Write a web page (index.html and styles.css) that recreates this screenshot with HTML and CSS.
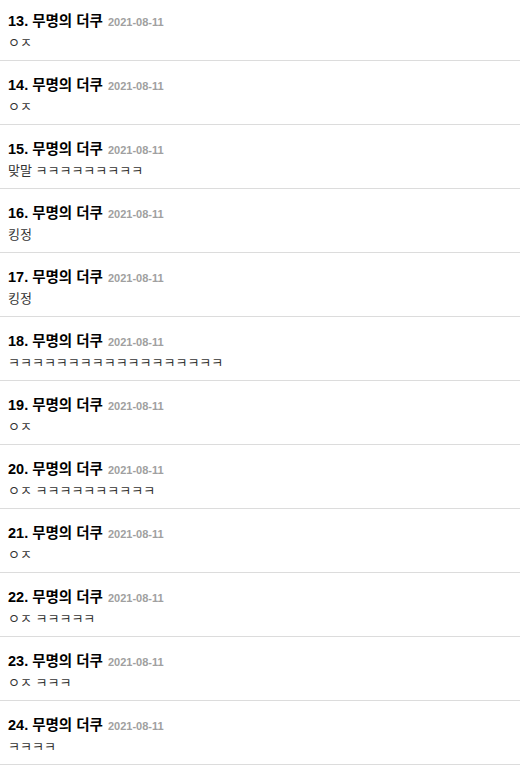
FILE: index.html
```html
<!DOCTYPE html>
<html lang="ko">
<head>
  <meta charset="UTF-8">
  <meta name="viewport" content="width=device-width, initial-scale=1.0">
  <title>댓글</title>
  <link rel="stylesheet" href="styles.css">
</head>
<body>
  <ul class="comments">
    <li class="comment">
      <div class="comment-head"><span class="comment-name">13. 무명의 더쿠</span><span class="comment-date">2021-08-11</span></div>
      <div class="comment-body">ㅇㅈ</div>
    </li>
    <li class="comment">
      <div class="comment-head"><span class="comment-name">14. 무명의 더쿠</span><span class="comment-date">2021-08-11</span></div>
      <div class="comment-body">ㅇㅈ</div>
    </li>
    <li class="comment">
      <div class="comment-head"><span class="comment-name">15. 무명의 더쿠</span><span class="comment-date">2021-08-11</span></div>
      <div class="comment-body">맞말 ㅋㅋㅋㅋㅋㅋㅋㅋㅋ</div>
    </li>
    <li class="comment">
      <div class="comment-head"><span class="comment-name">16. 무명의 더쿠</span><span class="comment-date">2021-08-11</span></div>
      <div class="comment-body">킹정</div>
    </li>
    <li class="comment">
      <div class="comment-head"><span class="comment-name">17. 무명의 더쿠</span><span class="comment-date">2021-08-11</span></div>
      <div class="comment-body">킹정</div>
    </li>
    <li class="comment">
      <div class="comment-head"><span class="comment-name">18. 무명의 더쿠</span><span class="comment-date">2021-08-11</span></div>
      <div class="comment-body">ㅋㅋㅋㅋㅋㅋㅋㅋㅋㅋㅋㅋㅋㅋㅋㅋㅋㅋ</div>
    </li>
    <li class="comment">
      <div class="comment-head"><span class="comment-name">19. 무명의 더쿠</span><span class="comment-date">2021-08-11</span></div>
      <div class="comment-body">ㅇㅈ</div>
    </li>
    <li class="comment">
      <div class="comment-head"><span class="comment-name">20. 무명의 더쿠</span><span class="comment-date">2021-08-11</span></div>
      <div class="comment-body">ㅇㅈ ㅋㅋㅋㅋㅋㅋㅋㅋㅋㅋ</div>
    </li>
    <li class="comment">
      <div class="comment-head"><span class="comment-name">21. 무명의 더쿠</span><span class="comment-date">2021-08-11</span></div>
      <div class="comment-body">ㅇㅈ</div>
    </li>
    <li class="comment">
      <div class="comment-head"><span class="comment-name">22. 무명의 더쿠</span><span class="comment-date">2021-08-11</span></div>
      <div class="comment-body">ㅇㅈ ㅋㅋㅋㅋㅋ</div>
    </li>
    <li class="comment">
      <div class="comment-head"><span class="comment-name">23. 무명의 더쿠</span><span class="comment-date">2021-08-11</span></div>
      <div class="comment-body">ㅇㅈ ㅋㅋㅋ</div>
    </li>
    <li class="comment">
      <div class="comment-head"><span class="comment-name">24. 무명의 더쿠</span><span class="comment-date">2021-08-11</span></div>
      <div class="comment-body">ㅋㅋㅋㅋ</div>
    </li>
  </ul>
</body>
</html>
```

FILE: styles.css
```css
body {
  margin: 0;
  padding: 0;
  background: #fff;
  font-family: "Liberation Sans", "Noto Sans CJK KR", sans-serif;
}

.comments {
  list-style: none;
  margin: -3px 0 0;
  padding: 0;
}

.comment {
  height: 63px;
  padding: 0 8px;
  border-bottom: 1px solid #dcdcdc;
}

.comment-head {
  padding-top: 14px;
  line-height: 20px;
}

.comment-name {
  font-size: 14.5px;
  font-weight: bold;
  color: #000;
}

.comment-date {
  margin-left: 5px;
  font-size: 11px;
  font-weight: bold;
  color: #a0a0a0;
}

.comment-body {
  font-size: 13px;
  line-height: 21px;
  color: #333;
}
```
